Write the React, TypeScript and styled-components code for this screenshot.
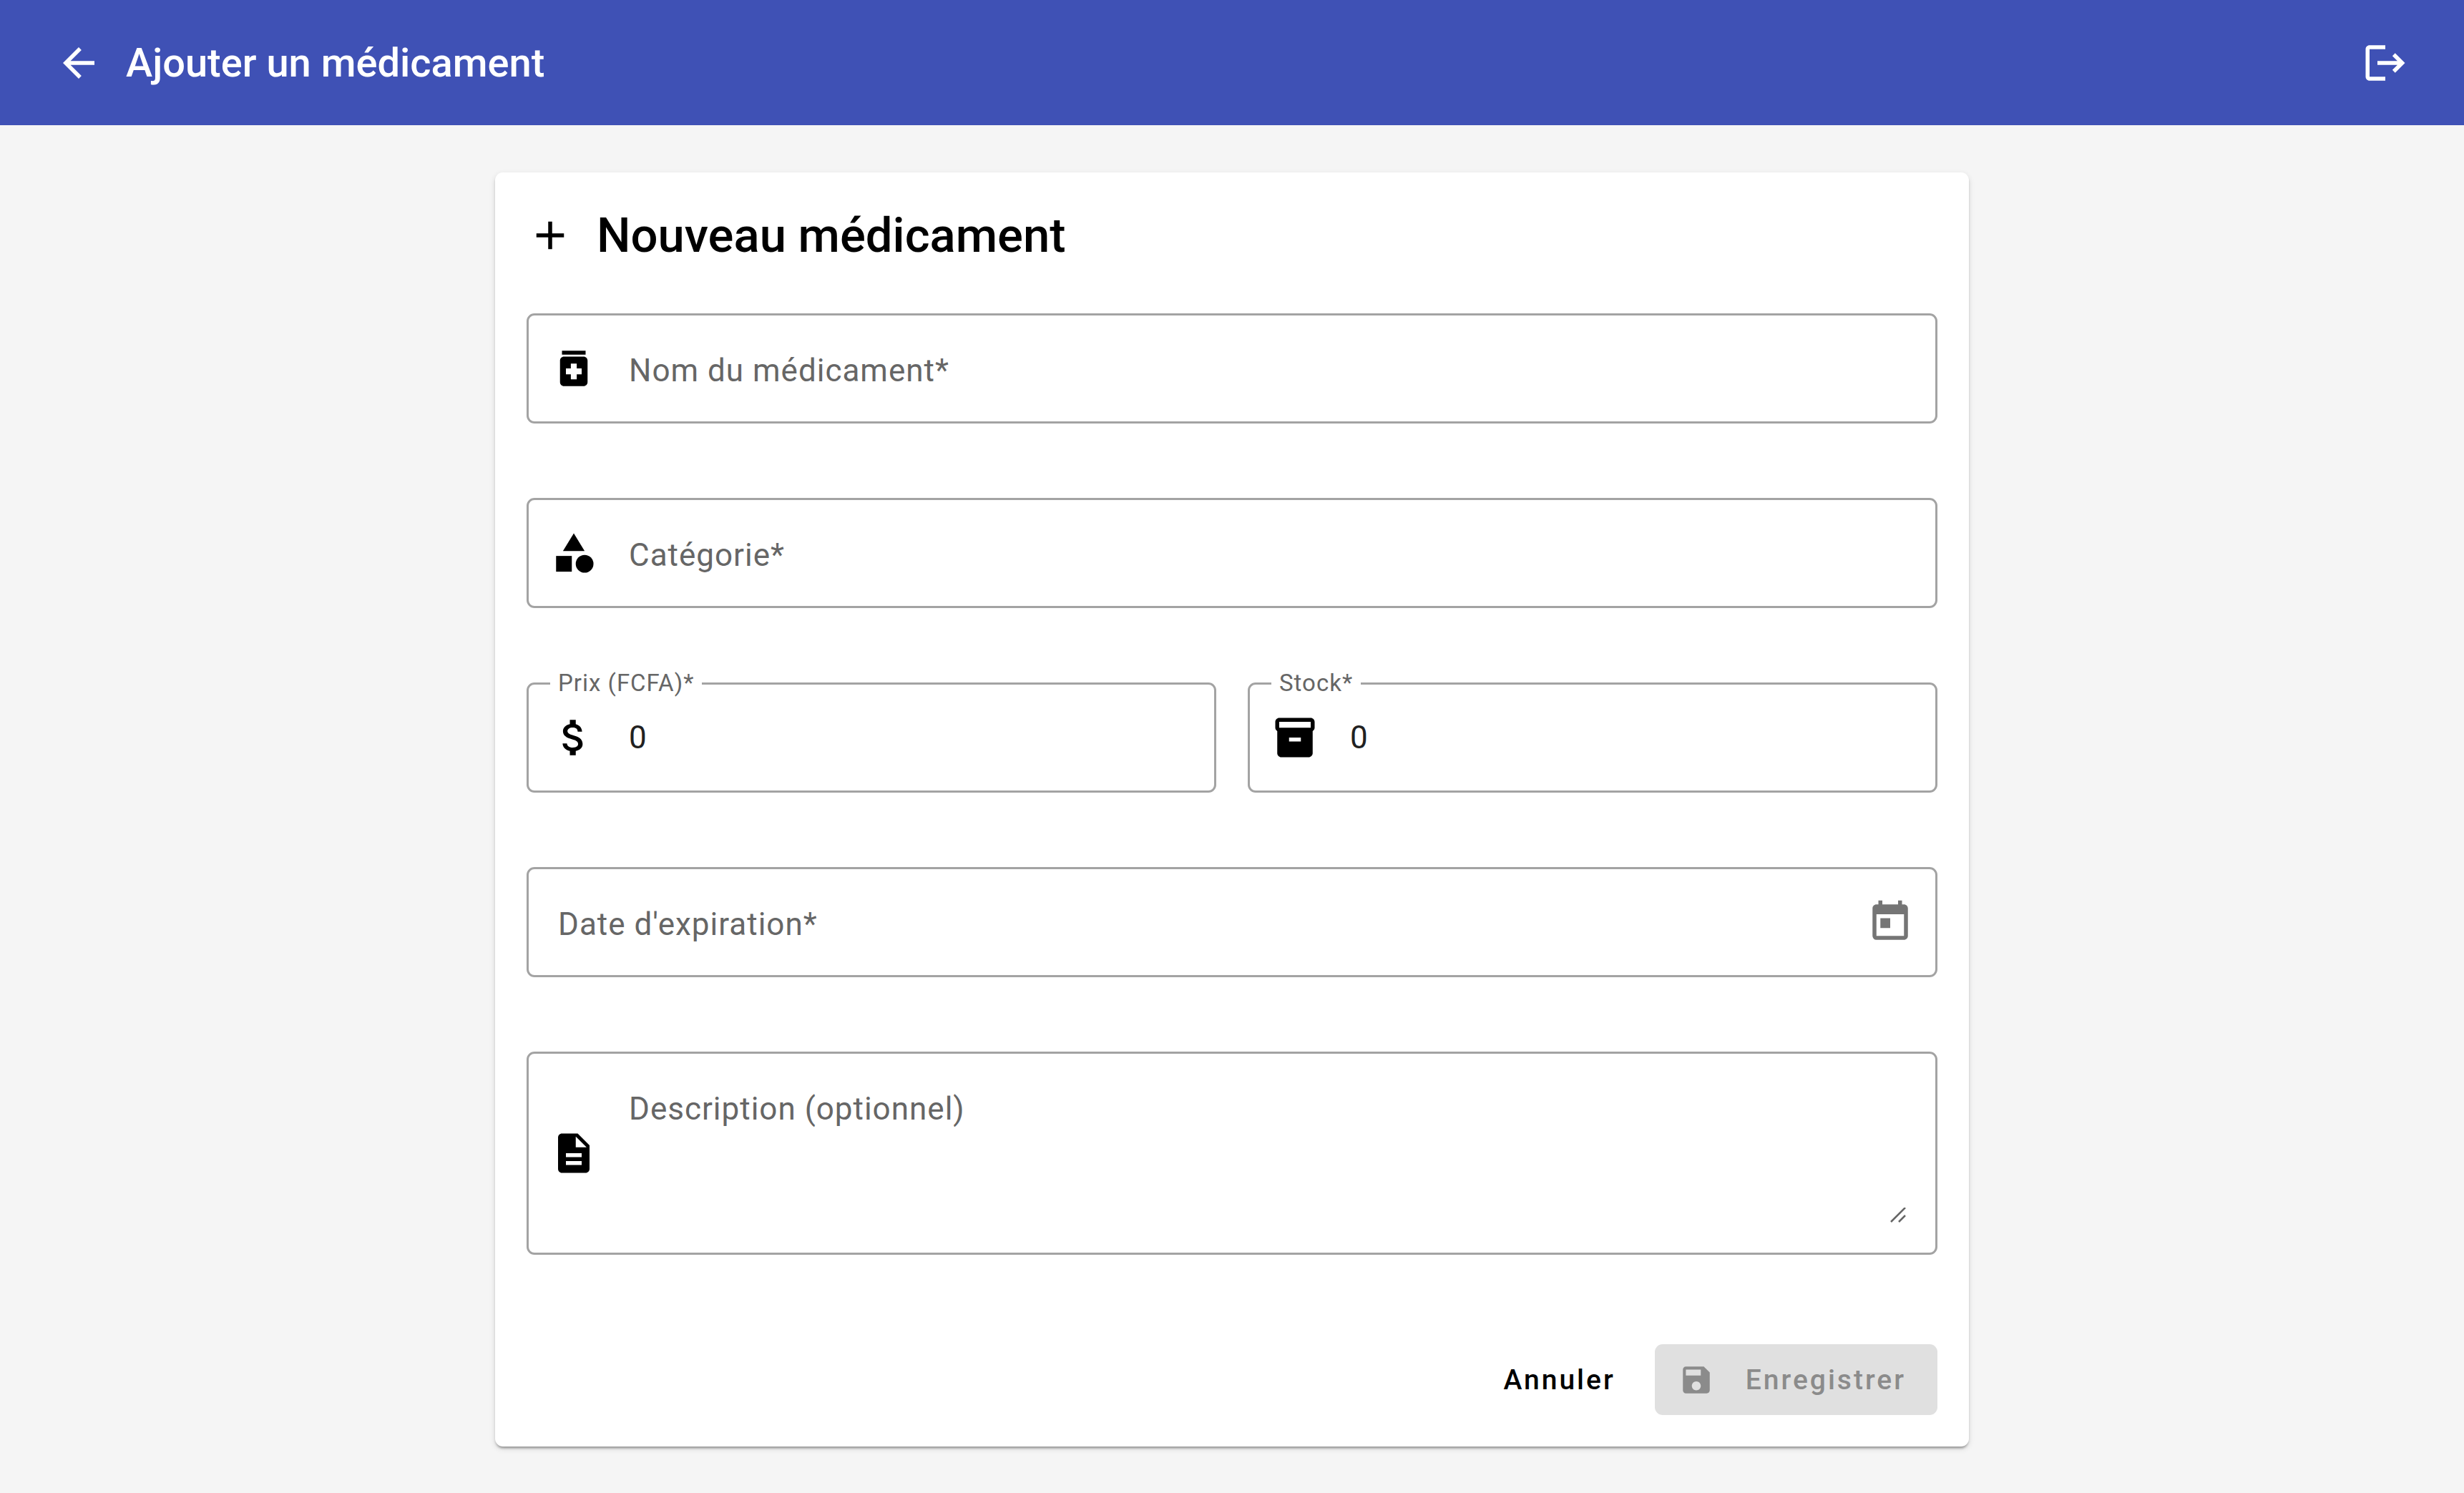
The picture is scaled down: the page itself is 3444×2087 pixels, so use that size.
import React, { useId, useState } from "react";
import styled, { createGlobalStyle, css } from "styled-components";
import {
  MdAdd,
  MdArrowBack,
  MdAttachMoney,
  MdCategory,
  MdDescription,
  MdInventory2,
  MdLogout,
  MdMedication,
  MdSave,
  MdToday,
} from "react-icons/md";

const GlobalStyle = createGlobalStyle`
  *, *::before, *::after { box-sizing: border-box; }
  body {
    margin: 0;
    background: #f5f5f5;
    font-family: Roboto, "Liberation Sans", sans-serif;
    color: #000;
  }
  button, input, textarea { font: inherit; }
`;

const Toolbar = styled.header`
  display: flex;
  align-items: center;
  height: 175px;
  padding: 0 44px;
  background: #3f51b5;
  color: #fff;
`;

const IconButton = styled.button`
  display: flex;
  align-items: center;
  justify-content: center;
  flex: none;
  width: 132px;
  height: 132px;
  padding: 0;
  border: 0;
  border-radius: 50%;
  background: transparent;
  color: inherit;
  font-size: 66px;
  cursor: pointer;
`;

const PageTitle = styled.h1`
  flex: 1;
  margin: 0;
  font-size: 56px;
  line-height: 88px;
  font-weight: 500;
`;

const Main = styled.main`
  padding: 66px 44px 44px;
`;

const Card = styled.section`
  max-width: 2060px;
  margin: 0 auto;
  padding: 44px;
  border-radius: 11px;
  background: #fff;
  box-shadow:
    0 5px 3px -3px rgba(0, 0, 0, 0.2),
    0 3px 3px 0 rgba(0, 0, 0, 0.14),
    0 3px 8px 0 rgba(0, 0, 0, 0.12);
`;

const CardTitle = styled.h2`
  display: flex;
  align-items: center;
  gap: 32px;
  margin: 0 0 65px;
  font-size: 67px;
  line-height: 88px;
  font-weight: 500;

  svg {
    font-size: 66px;
  }
`;

const Form = styled.form`
  display: flex;
  flex-direction: column;
  gap: 104px;
`;

const FieldRow = styled.div`
  display: grid;
  grid-template-columns: 1fr 1fr;
  gap: 44px;
`;

const FieldBox = styled.div<{ $plain?: boolean }>`
  position: relative;
  display: flex;
  align-items: center;
  gap: 44px;
  padding: 0 ${(p) => (p.$plain ? 30 : 41)}px 0 ${(p) => (p.$plain ? 41 : 30)}px;
  border: 3px solid #a3a3a3;
  border-radius: 11px;

  &:focus-within {
    border-color: #3f51b5;
  }
`;

const Prefix = styled.span`
  display: flex;
  flex: none;
  font-size: 66px;
`;

const Label = styled.label<{ $floating: boolean; $plain?: boolean }>`
  position: absolute;
  color: #666;
  letter-spacing: 1px;
  white-space: nowrap;
  pointer-events: none;
  ${(p) =>
    p.$floating
      ? css`
          top: -24px;
          left: 30px;
          padding: 0 11px;
          background: #fff;
          font-size: 33px;
          line-height: 44px;
        `
      : css`
          top: 44px;
          left: ${p.$plain ? 41 : 140}px;
          font-size: 44px;
          line-height: 66px;
        `}
`;

const control = css`
  flex: 1;
  min-width: 0;
  padding: 0;
  border: 0;
  outline: 0;
  background: transparent;
  color: #212121;
  font-size: 44px;
  line-height: 66px;
  letter-spacing: 1px;
`;

const TextInput = styled.input`
  ${control}
  height: 148px;
  appearance: textfield;

  &::-webkit-inner-spin-button {
    appearance: none;
    margin: 0;
  }
`;

const TextArea = styled.textarea`
  ${control}
  height: 196px;
  margin: 41px 0;
  resize: none;
`;

const Grip = styled.svg`
  position: absolute;
  right: 41px;
  bottom: 41px;
  width: 22px;
  height: 22px;
  stroke: #666;
  stroke-width: 2.5;
`;

const DateToggle = styled.button`
  display: flex;
  padding: 0;
  border: 0;
  background: transparent;
  color: #757575;
  font-size: 66px;
  cursor: pointer;
`;

const Actions = styled.div`
  display: flex;
  justify-content: flex-end;
  gap: 22px;
  padding-top: 21px;
`;

const TextButton = styled.button`
  height: 99px;
  padding: 0 33px;
  border: 0;
  border-radius: 11px;
  background: transparent;
  color: #000;
  font-size: 39px;
  font-weight: 500;
  letter-spacing: 3px;
  cursor: pointer;
`;

const SaveButton = styled(TextButton)`
  display: flex;
  align-items: center;
  gap: 44px;
  padding: 0 44px 0 33px;
  background: #3f51b5;
  color: #fff;

  svg {
    font-size: 50px;
  }

  &:disabled {
    background: #e0e0e0;
    color: #8b8b8b;
    cursor: default;
  }
`;

type FieldProps = {
  label: string;
  value: string;
  onChange: (value: string) => void;
  icon?: React.ReactNode;
  suffix?: React.ReactNode;
  type?: string;
  required?: boolean;
  multiline?: boolean;
};

function Field({ label, value, onChange, icon, suffix, type = "text", required, multiline }: FieldProps) {
  const id = useId();
  const [focused, setFocused] = useState(false);
  const shared = {
    id,
    value,
    required,
    onFocus: () => setFocused(true),
    onBlur: () => setFocused(false),
  };
  return (
    <FieldBox $plain={!icon}>
      {icon && <Prefix aria-hidden="true">{icon}</Prefix>}
      {multiline ? (
        <TextArea {...shared} onChange={(e) => onChange(e.target.value)} />
      ) : (
        <TextInput {...shared} type={type} onChange={(e) => onChange(e.target.value)} />
      )}
      <Label htmlFor={id} $floating={focused || value !== ""} $plain={!icon}>
        {label}
        {required && "*"}
      </Label>
      {multiline && (
        <Grip viewBox="0 0 22 22" aria-hidden="true">
          <path d="M1 20 21 0M12 20 21 11" />
        </Grip>
      )}
      {suffix}
    </FieldBox>
  );
}

export default function App() {
  const [form, setForm] = useState({
    nom: "",
    categorie: "",
    prix: "0",
    stock: "0",
    expiration: "",
    description: "",
  });
  const set = (key: keyof typeof form) => (value: string) => setForm((f) => ({ ...f, [key]: value }));
  const valid = Boolean(form.nom && form.categorie && form.prix && form.stock && form.expiration);

  return (
    <>
      <GlobalStyle />
      <Toolbar>
        <IconButton type="button" aria-label="Retour">
          <MdArrowBack />
        </IconButton>
        <PageTitle>Ajouter un médicament</PageTitle>
        <IconButton type="button" aria-label="Se déconnecter">
          <MdLogout />
        </IconButton>
      </Toolbar>
      <Main>
        <Card>
          <CardTitle>
            <MdAdd aria-hidden="true" />
            Nouveau médicament
          </CardTitle>
          <Form onSubmit={(e) => e.preventDefault()}>
            <Field label="Nom du médicament" icon={<MdMedication />} value={form.nom} onChange={set("nom")} required />
            <Field label="Catégorie" icon={<MdCategory />} value={form.categorie} onChange={set("categorie")} required />
            <FieldRow>
              <Field
                label="Prix (FCFA)"
                type="number"
                icon={<MdAttachMoney />}
                value={form.prix}
                onChange={set("prix")}
                required
              />
              <Field
                label="Stock"
                type="number"
                icon={<MdInventory2 />}
                value={form.stock}
                onChange={set("stock")}
                required
              />
            </FieldRow>
            <Field
              label="Date d'expiration"
              value={form.expiration}
              onChange={set("expiration")}
              required
              suffix={
                <DateToggle type="button" aria-label="Ouvrir le calendrier">
                  <MdToday />
                </DateToggle>
              }
            />
            <Field
              label="Description (optionnel)"
              icon={<MdDescription />}
              value={form.description}
              onChange={set("description")}
              multiline
            />
            <Actions>
              <TextButton type="button">Annuler</TextButton>
              <SaveButton type="submit" disabled={!valid}>
                <MdSave aria-hidden="true" />
                Enregistrer
              </SaveButton>
            </Actions>
          </Form>
        </Card>
      </Main>
    </>
  );
}
